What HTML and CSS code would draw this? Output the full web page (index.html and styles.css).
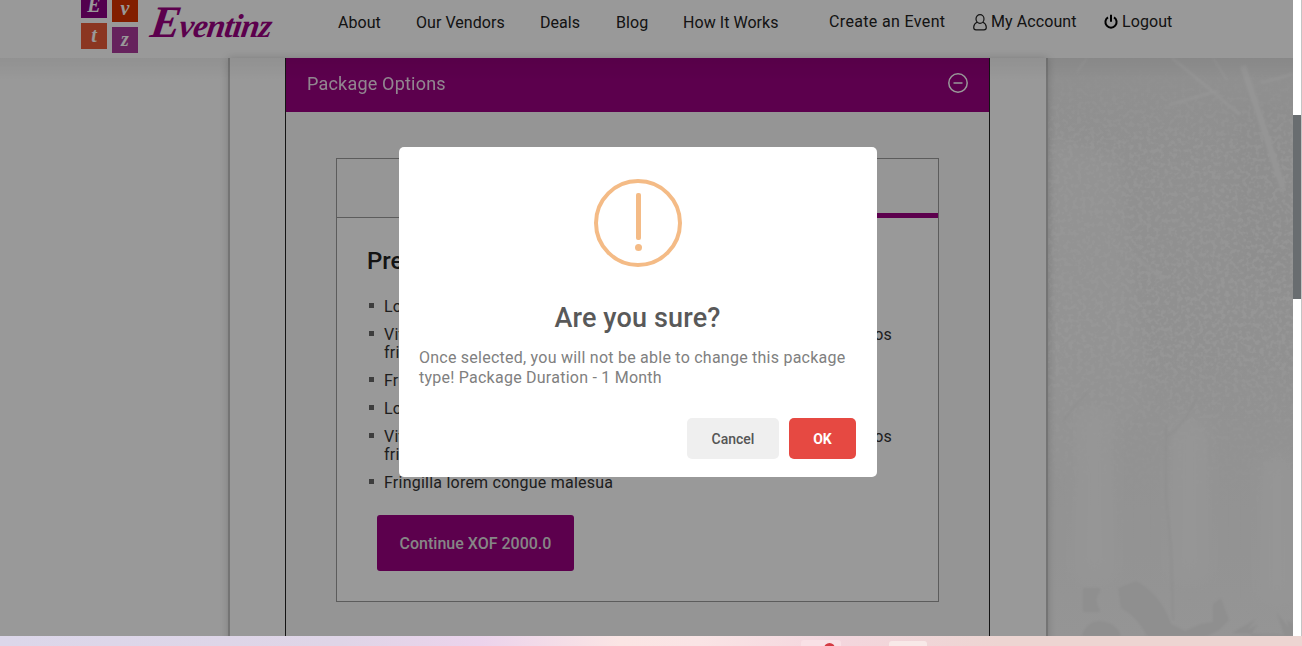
FILE: index.html
```html
<!DOCTYPE html>
<html lang="en">
<head>
<meta charset="utf-8">
<title>Eventinz</title>
<link rel="stylesheet" href="styles.css">
</head>
<body>
<div class="screen">
  <div class="viewport">
    <div class="page">
      <header class="site-header">
        <div class="logo">
          <div class="logo-tiles">
            <div class="tile tile-e">E</div><div class="tile tile-v">v</div>
            <div class="tile tile-t">t</div><div class="tile tile-z">z</div>
          </div>
          <div class="wordmark"><span class="cap">E</span>ventinz</div>
        </div>
        <nav class="main-nav">
          <a class="n-about">About</a><a class="n-vendors">Our Vendors</a><a class="n-deals">Deals</a><a class="n-blog">Blog</a><a class="n-how">How It Works</a>
        </nav>
        <nav class="user-nav">
          <a class="n-create">Create an Event</a>
          <a class="n-account"><svg width="14" height="17" viewBox="0 0 14 17"><path d="M4 8.200C2.200 9 .8 10.400 .7 13.200c0 1.700 .9 2.600 2.300 2.600h8c1.400 0 2.300-.9 2.300-2.600-.1-2.800-1.500-4.200-3.300-5"/><ellipse cx="7" cy="5" rx="4" ry="4.300"/></svg>My Account</a>
          <a class="n-logout"><svg class="power" width="14" height="16" viewBox="0 0 14 16"><path d="M4 3.300a5.600 5.600 0 1 0 6 0M7 .7v7"/></svg>Logout</a>
        </nav>
      </header>
      <main class="stage">
        <svg class="concert" width="246" height="578" viewBox="0 0 246 578">
          <defs>
            <filter id="speckle" x="0" y="0" width="100%" height="100%">
              <feTurbulence type="fractalNoise" baseFrequency=".23" numOctaves="2" seed="8"/>
              <feColorMatrix values="0 0 0 0 1  0 0 0 0 1  0 0 0 0 1  5 0 0 0 -2.300"/>
            </filter>
            <linearGradient id="fade" x1="0" y1="0" x2="0" y2="1">
              <stop offset="0" stop-color="#000"/><stop offset=".15" stop-color="#888"/><stop offset=".5" stop-color="#aaa"/><stop offset=".75" stop-color="#222"/><stop offset="1" stop-color="#000"/>
            </linearGradient>
            <linearGradient id="base" x1="0" y1="0" x2="0" y2="1">
              <stop offset="0" stop-color="#efefef"/><stop offset=".5" stop-color="#f1f1f1"/><stop offset="1" stop-color="#f8f8f8"/>
            </linearGradient>
            <filter id="soft"><feGaussianBlur stdDeviation=".8"/></filter>
            <filter id="wide" x="-50%" y="-50%" width="200%" height="200%"><feGaussianBlur stdDeviation="9"/></filter>
            <mask id="m"><rect width="246" height="578" fill="url(#fade)"/></mask>
          </defs>
          <rect width="246" height="578" fill="url(#base)"/>
          <g filter="url(#wide)"><path d="M180 40h70v200l-60 -30z" fill="#ededed"/><path d="M0 80l70 20 30 260-100 60z" fill="#f5f5f5"/><path d="M30 350h35v170H30zM125 360h35v160h-35zM215 400h30v140h-30z" fill="#fafafa"/></g>
          <g mask="url(#m)"><rect width="246" height="578" filter="url(#speckle)"/></g>
          <g fill="none" stroke="#f9f9f9" filter="url(#soft)">
            <path d="M196 8l16 48 24 74" stroke-width="6"/><path d="M125 0l40 33 28 24" stroke-width="2.500"/><path d="M122 47l48-14M214 25l32-9M83 195l34 27M5 217l26 14" stroke-width="2.500"/><path d="M166 0l14 22M40 0l-10 14" stroke-width="1.500"/>
          </g>
          <g fill="none" stroke="#efefef" filter="url(#soft)"><path d="M119 367l0 70 5 55 2 70M120 378q15-8 30-38M15 365q10-15 25-30" stroke-width="2"/></g>
          <g fill="#eee" filter="url(#soft)">
            <path d="M36 530h17v4q-7 7 0 18v2H36z"/><path d="M71 530l18-7q25 13 35 43l24 12H100q-10-20-26-28z"/><path d="M35 578q4-14 17-15 17 1 22 15z"/><path d="M166 546l8-6 8 22-10 10-12 6h-34l28-12 12-2z"/><path d="M185 575l24-14-9 11 11-6-8 12h43v-12l-6-4 2 8-12-15 7 22z"/>
          </g>
        </svg>
        <section class="shell">
          <div class="accordion">
            <div class="accordion-head"><span>Package Options</span>
              <svg width="20" height="20" viewBox="0 0 20 20"><circle cx="10" cy="10" r="9.200"/><path d="M5.500 10h9"/></svg>
            </div>
            <div class="accordion-body">
              <div class="card">
                <div class="tabs"><div class="tab"></div><div class="tab active"></div></div>
                <div class="package">
                  <h2>Premium</h2>
                  <ul>
                    <li>Lorem</li>
                    <li><div class="wide"><span>Vitae</span><span>eros</span></div>fringilla</li>
                    <li>Fringilla</li>
                    <li>Lorem</li>
                    <li><div class="wide"><span>Vitae</span><span>eros</span></div>fringilla</li>
                    <li class="last">Fringilla lorem congue malesua</li>
                  </ul>
                  <button class="continue">Continue XOF 2000.0</button>
                </div>
              </div>
            </div>
          </div>
        </section>
        <div class="header-shade"></div>
      </main>
      <div class="overlay">
        <div class="modal">
          <div class="warning"><i class="bar"></i><i class="dot"></i></div>
          <h1>Are you sure?</h1>
          <p>Once selected, you will not be able to change this package<br>type! Package Duration - 1 Month</p>
          <div class="actions"><button class="cancel">Cancel</button><button class="ok">OK</button></div>
        </div>
      </div>
    </div>
    <div class="scrollbar"><div class="thumb"></div></div>
  </div>
  <div class="taskbar"><div class="task t1"><i></i></div><div class="task t2"></div></div>
</div>
</body>
</html>
```
FILE: styles.css
```css
* { box-sizing: border-box; }
body { margin: 0; font-family: Roboto, "Liberation Sans", sans-serif; overflow: hidden; }
.screen { width: 1302px; height: 646px; display: flex; flex-direction: column; }
.viewport { height: 636px; display: flex; }
.page { position: relative; width: 1293px; height: 636px; overflow: hidden; background: #fff; }

.site-header { height: 58px; display: flex; align-items: flex-start; background: #fff; color: #222; font-size: 16px; overflow: hidden; }
.logo { width: 338px; height: 58px; display: flex; padding-left: 81px; }
.logo-tiles { width: 58px; height: 61px; display: grid; grid-template-columns: 26px 26px; grid-template-rows: 26px 26px; column-gap: 5px; row-gap: 4px; margin-top: -8px; }
.tile { height: 26px; color: #fff; font: italic bold 20px/24px "Liberation Serif", serif; text-align: center; transform-origin: center; }
.tile-e { background: #8b0082; line-height: 27px; }
.tile-v { background: #d93300; margin-top: 4px; }
.tile-t { background: #e85b38; margin-top: 1px; }
.tile-z { background: #aa3a9b; margin-top: 5px; }
.wordmark { margin: -7px 0 0 12px; color: #990080; font: italic bold 33px/58px "Liberation Serif", serif; letter-spacing: -.8px; transform: skewX(-8deg); white-space: nowrap; height: 58px; }
.cap { font-size: 45px; }
.main-nav, .user-nav { display: flex; white-space: nowrap; line-height: 20px; }
.main-nav { padding-top: 13px; width: 491px; letter-spacing: .05px; }
.n-about { width: 78px; } .n-vendors { width: 124px; } .n-deals { width: 76px; } .n-blog { width: 67px; }
.user-nav { padding-top: 12px; letter-spacing: .08px; }
.user-nav a { display: flex; align-items: center; }
.user-nav .n-create { width: 144px; letter-spacing: .35px; } .n-account { width: 131px; }
.user-nav svg { margin-right: 4px; fill: none; stroke: #222; stroke-width: 1.2; }
.user-nav .power { stroke-width: 2; stroke: #000; }

.stage { position: relative; height: 578px; padding-left: 228px; display: flex; background: #fff; }
.concert { position: absolute; right: 0; top: 0; }
.header-shade { position: absolute; left: 0; right: 0; top: 0; height: 22px; background: linear-gradient(rgba(0,0,0,.05), transparent); }
.shell { position: relative; width: 820px; height: 640px; border: solid #c1c1c1; border-width: 0 2px; padding: 0 56px 0 55px; background: #fff; box-shadow: 0 0 8px rgba(0,0,0,.18); }
.accordion { width: 705px; height: 640px; border: solid #222; border-width: 0 1px; }
.accordion-head { height: 54px; display: flex; align-items: center; justify-content: space-between; padding: 0 21px; background: #990080; color: #fff; font-size: 18px; letter-spacing: .2px; }
.accordion-head span { padding-bottom: 3px; opacity: .88; }
.accordion-head svg { margin-top: -4px; fill: none; stroke: #fff; stroke-width: 1.5; }
.accordion-body { height: 590px; padding: 46px 50px; background: #f8f8f8; }
.card { width: 603px; height: 444px; border: 1px solid #999; background: #fff; }
.tabs { height: 59px; display: flex; background: #fafafa; }
.tab { width: 50%; border-bottom: 1px solid #999; }
.tab.active { border-bottom: 5px solid #990080; }
.package { padding: 29px 46px 0 30px; color: #333; }
.package h2 { margin: 0; font-size: 24px; line-height: 28px; font-weight: 500; color: #222; }
.package ul { list-style: none; margin: 23px 0 0; padding: 0; display: flex; flex-direction: column; gap: 10px; font-size: 16px; line-height: 18px; letter-spacing: .23px; }
.package li { display: grid; padding-left: 17px; background: linear-gradient(#666, #666) 2px 5px / 5px 5px no-repeat; }
.wide { display: flex; justify-content: space-between; }
.continue { display: block; margin: 23px 0 0 10px; width: 197px; height: 56px; border: 0; border-radius: 3px; background: #990080; color: #dfdfdf; font: 500 16px Roboto, sans-serif; letter-spacing: 0; padding: 0; white-space: nowrap; }

.overlay { position: absolute; inset: 0; background: rgba(0,0,0,.4); display: flex; justify-content: center; padding: 147px 17px 0 0; }
.modal { width: 478px; height: 330px; border-radius: 5px; background: #fff; padding: 32px 21px 0 20px; }
.warning { width: 88px; height: 88px; margin: 0 auto; border: 4px solid #f4bb86; border-radius: 50%; display: flex; flex-direction: column; align-items: center; padding: 10px 0 0 1px; }
.bar { width: 5px; height: 47px; border-radius: 2px; background: #f4bb86; }
.dot { width: 7px; height: 7px; margin-top: 4px; border-radius: 50%; background: #f4bb86; }
.modal h1 { margin: 35px 0 0; text-align: center; font-size: 27px; line-height: 32px; font-weight: 500; color: #595959; white-space: nowrap; letter-spacing: .15px; }
.modal p { margin: 14px 0 0; font-size: 16px; line-height: 20px; letter-spacing: .24px; color: #808080; white-space: nowrap; }
.actions { display: flex; justify-content: flex-end; gap: 10px; margin-top: 30px; }
.actions button { height: 41px; padding: 0; border: 0; border-radius: 5px; font: 500 14px Roboto, sans-serif; }
.actions .cancel { width: 92px; background: #efefef; color: #555; }
.actions .ok { width: 67px; background: #e64942; color: #fff; font-weight: 700; }

.scrollbar { width: 9px; height: 636px; background: #fff; border-right: 1px solid #c4c4c4; padding-top: 115px; }
.thumb { height: 184px; background: #696d70; }
.taskbar { height: 10px; display: flex; align-items: flex-end; padding-left: 801px; gap: 48px; overflow: hidden; background: linear-gradient(90deg, #dcd7ea 0, #dfd5e7 340px, #ecd3ec 480px, #fbe5e4 620px, #fae4e5 700px, #f4d6de 830px, #edd5d2 1000px, #edd5d2 1302px); }
.task { width: 40px; height: 6px; border-radius: 3px 3px 0 0; background: #f9e1e6; }
.t1 i { display: block; margin: 3px 0 0 23px; width: 11px; height: 11px; border-radius: 50%; background: #d43b43; }
.t2 { width: 38px; height: 5px; background: #f8e9e8; }
```
